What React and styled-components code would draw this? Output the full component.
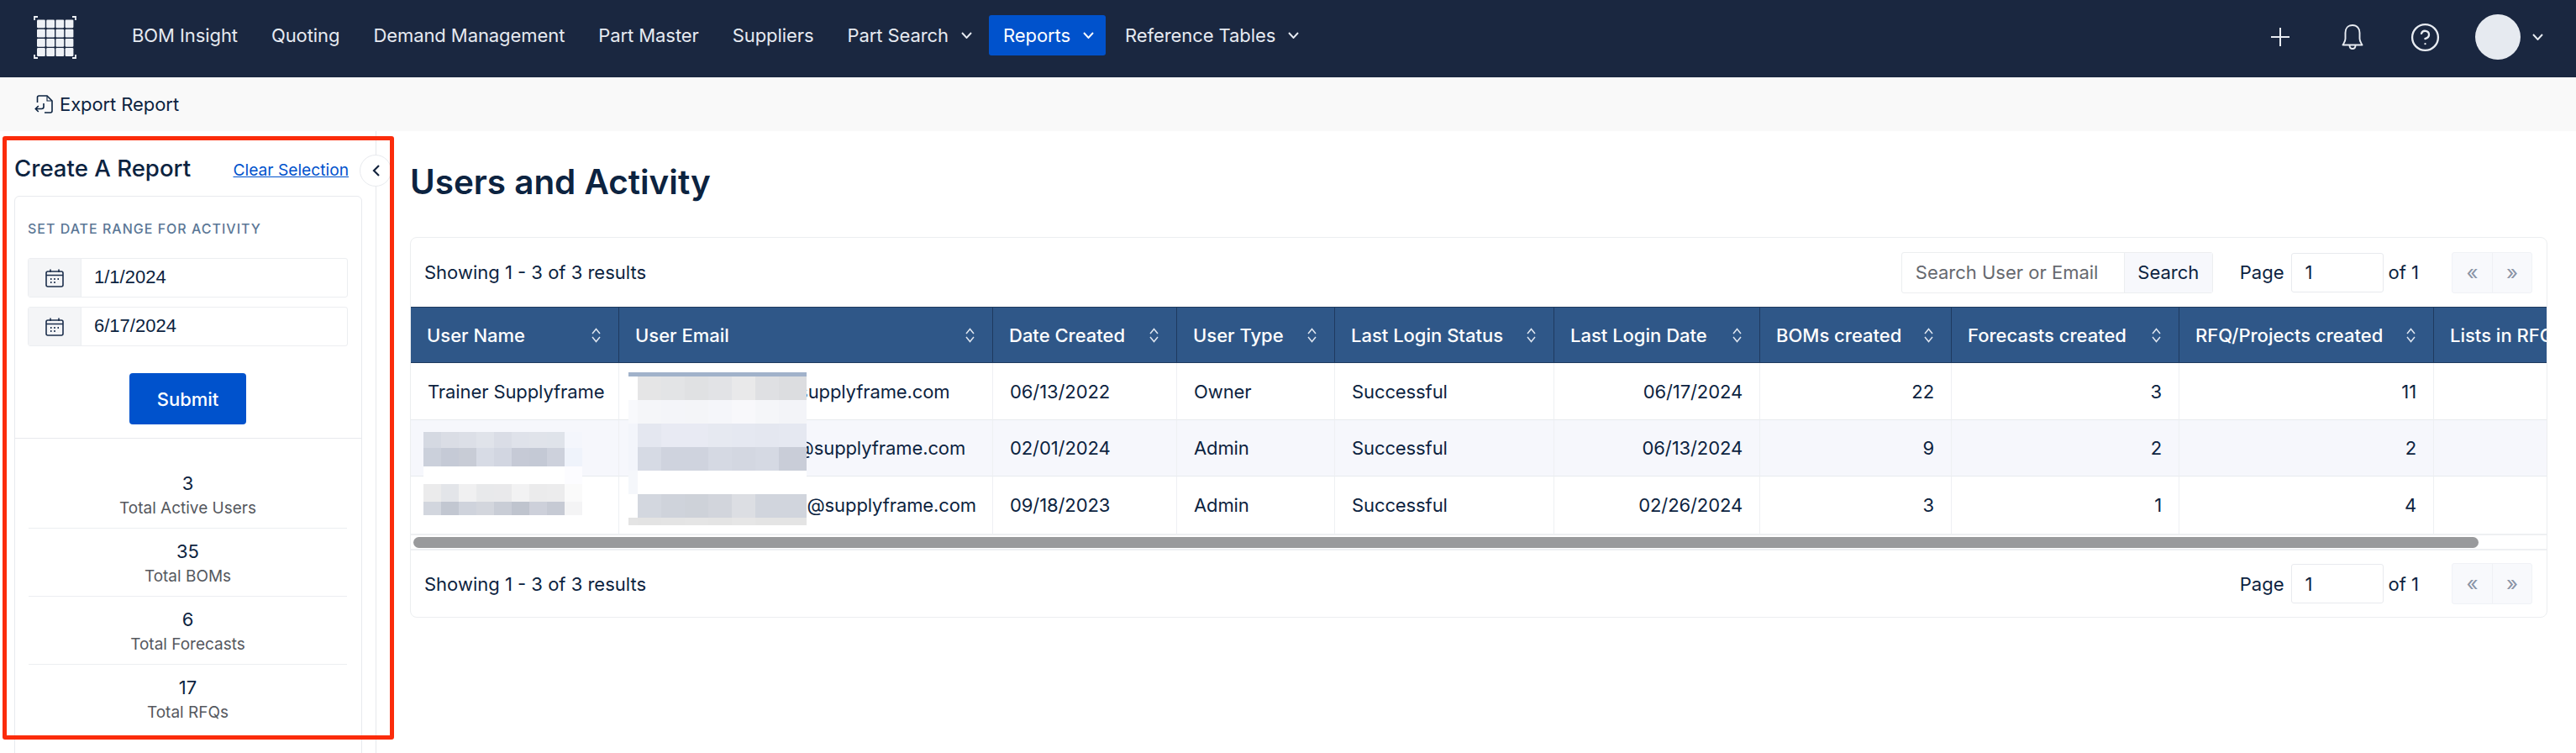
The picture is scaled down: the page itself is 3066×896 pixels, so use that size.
import styled, { createGlobalStyle } from "styled-components";
import { CircleHelp } from "lucide-react";

const GlobalStyle = createGlobalStyle`
  html, body {
    margin: 0;
    padding: 0;
    height: 100%;
    overflow: hidden;
    background: #fff;
    font-family: Inter, "Liberation Sans", sans-serif;
    color: #0c2340;
  }
  * {
    box-sizing: border-box;
  }
`;

const navItems = [
  { label: "BOM Insight" },
  { label: "Quoting" },
  { label: "Demand Management" },
  { label: "Part Master" },
  { label: "Suppliers" },
  { label: "Part Search", caret: true },
  { label: "Reports", caret: true, active: true },
  { label: "Reference Tables", caret: true },
];

const stats = [
  { value: 3, label: "Total Active Users" },
  { value: 35, label: "Total BOMs" },
  { value: 6, label: "Total Forecasts" },
  { value: 17, label: "Total RFQs" },
];

const columns = [
  { label: "User Name", width: 248 },
  { label: "User Email", width: 445 },
  { label: "Date Created", width: 219 },
  { label: "User Type", width: 188 },
  { label: "Last Login Status", width: 261 },
  { label: "Last Login Date", width: 245 },
  { label: "BOMs created", width: 228 },
  { label: "Forecasts created", width: 271 },
  { label: "RFQ/Projects created", width: 303 },
  { label: "Lists in RFQ/Projects", width: 290 },
];

const rows = [
  ["Trainer Supplyframe", "xxxxxxxxxxxxxxi@supplyframe.com", "06/13/2022", "Owner", "Successful", "06/17/2024", 22, 3, 11],
  ["", "xxxxxxxxxxxxxxxx@supplyframe.com", "02/01/2024", "Admin", "Successful", "06/13/2024", 9, 2, 2],
  ["", "xxxxxxxxxxxxxxxxg@supplyframe.com", "09/18/2023", "Admin", "Successful", "02/26/2024", 3, 1, 4],
];

// mosaic colours of the blurred names and emails, row by row
const nameBlur = [
  { h: 19, cells: ["#d5d9e2", "#dadde5", "#dcdfe7", "#e0e3ea", "#dadde6", "#dfe2ea", "#e0e3ea", "#dfe3ea", "#f4f6fc"] },
  { h: 22, cells: ["#cbd0db", "#c5cad6", "#c8ccd6", "#d7dbe5", "#d2d6e1", "#c6cad6", "#c4c9d5", "#cdd1dc", "#eff3fb"] },
  { h: 21, cells: ["#fff", "#fff", "#fff", "#fff", "#fff", "#fff", "#fff", "#fff", "#fcfcff"] },
  { h: 21, cells: ["#ebebec", "#e3e5e9", "#f0f0f1", "#e8e9eb", "#e9e9eb", "#f2f2f3", "#ebebec", "#ececed", "#fafafa"] },
  { h: 16, cells: ["#d2d6de", "#c2c7d1", "#cfd3dc", "#d3d6dd", "#c9cdd6", "#bfc4ce", "#cdd0da", "#c6cad4", "#f4f4f5"] },
];

const emailBlur = [
  { h: 5, cells: ["#a1b2ca", "#a1b2ca", "#a1b2ca", "#a1b2ca", "#a1b2ca", "#a1b2ca", "#a1b2ca", "#a1b2ca"] },
  { h: 28, cells: ["#fff", "#e5e5e6", "#e3e4e6", "#e0e1e3", "#e2e3e6", "#e9e9ea", "#dfe0e3", "#dcdde0"] },
  { h: 28, cells: ["#f8f9fc", "#f5f6f9", "#f4f5f9", "#f4f5f8", "#f5f6fa", "#f8f8fb", "#f5f6f9", "#f3f4f8"] },
  { h: 28, cells: ["#f3f5fb", "#e4e7f0", "#e8eaf3", "#e8eaf3", "#e6e9f1", "#e5e8f1", "#e4e7f0", "#e5e8f1"] },
  { h: 28, cells: ["#f3f5fb", "#d6dae4", "#cfd3de", "#cfd3de", "#d5d9e3", "#d3d7e1", "#d5d9e3", "#c9cdd8"] },
  { h: 28, cells: ["#f5f7fb", "#fff", "#fff", "#fff", "#fff", "#fff", "#fff", "#fff"] },
  { h: 28, cells: ["#fff", "#d3d7df", "#cfd3db", "#ced2d9", "#d2d5dc", "#dcdee3", "#d1d5dd", "#d1d5dd"] },
  { h: 9, cells: ["#e4e4e4", "#e3e3e3", "#e4e4e4", "#e5e5e5", "#e4e4e4", "#e6e6e6", "#e4e4e4", "#e4e4e4"] },
];

function Mosaic({ data, colWidths, className }) {
  let y = 0;
  const width = colWidths.reduce((a, b) => a + b, 0);
  const height = data.reduce((a, r) => a + r.h, 0);
  return (
    <svg className={className} width={width} height={height} viewBox={`0 0 ${width} ${height}`} shapeRendering="crispEdges">
      {data.map((row, i) => {
        let x = 0;
        const top = y;
        y += row.h;
        return row.cells.map((fill, j) => {
          const left = x;
          x += colWidths[j];
          return <rect key={`${i}-${j}`} x={left} y={top} width={colWidths[j]} height={row.h} fill={fill} />;
        });
      })}
    </svg>
  );
}

function Logo() {
  const cells = [];
  for (let r = 0; r < 4; r++) {
    for (let c = 0; c < 4; c++) {
      cells.push(<rect key={`${r}${c}`} x={4 + c * 11.2} y={4.5 + r * 11.2} width="9.8" height="9.8" rx="1.2" fill="#eef1f6" />);
    }
  }
  return (
    <svg width="51" height="51" viewBox="0 0 51 51" fill="none">
      {cells}
      <path d="M1 5V1H5M46 1H50V5M1 46V50H5M46 50H50V46" stroke="#eef1f6" strokeWidth="1.8" />
    </svg>
  );
}

function Caret() {
  return (
    <svg width="13" height="8" viewBox="0 0 13 8" fill="none">
      <polyline points="1,1 6.5,7 12,1" stroke="currentColor" strokeWidth="1.9" />
    </svg>
  );
}

function SortIcon() {
  return (
    <svg width="13" height="18" viewBox="0 0 13 18" fill="none">
      <path d="M2 7L6.5 1.5L11 7M2 11L6.5 16.5L11 11" stroke="#dfe6f0" strokeWidth="1.5" />
    </svg>
  );
}

function CalendarIcon() {
  return (
    <svg width="22" height="22" viewBox="0 0 22 22" fill="none" stroke="#1c2f4c" strokeWidth="1.6">
      <rect x="1" y="3" width="20" height="18" rx="2" />
      <path d="M1 7.5H21M6 0.5V4M16 0.5V4" />
      <path d="M6 12H7.5M10.2 12H11.8M14.5 12H16M6 16H7.5M10.2 16H11.8" strokeWidth="1.8" />
    </svg>
  );
}

function ExportIcon() {
  return (
    <svg width="22" height="22" viewBox="0 0 22 22" fill="none" stroke="#0c2340" strokeWidth="1.6">
      <path d="M3.5 9V3Q3.5 1 5.5 1H15L21 7V19Q21 21 19 21H12" />
      <path d="M15 1.5V7H20.5" strokeWidth="1.1" />
      <path d="M11 10V14Q11 16.5 8.5 16.5H1.5M4.8 13L1.3 16.5L4.8 20" />
    </svg>
  );
}

function BellIcon() {
  return (
    <svg width="26" height="30" viewBox="0 0 26 30" fill="none" stroke="#e8ecf2" strokeWidth="1.9">
      <path d="M13 1C7.5 1 4.5 5 4.5 10V17C4.5 20 3 21.5 1.5 24.5H24.5C23 21.5 21.5 20 21.5 17V10C21.5 5 18.5 1 13 1Z" strokeLinejoin="round" />
      <path d="M9.5 25C9.5 27.5 11 29 13 29C15 29 16.5 27.5 16.5 25" />
    </svg>
  );
}

function PlusIcon() {
  return (
    <svg width="22" height="22" viewBox="0 0 22 22" fill="none" stroke="#e8ecf2" strokeWidth="2">
      <path d="M11 0V22M0 11H22" />
    </svg>
  );
}

function ChevronLeftIcon() {
  return (
    <svg width="9" height="14" viewBox="0 0 9 14" fill="none" stroke="#13243e" strokeWidth="2.2">
      <polyline points="8,1 2,7 8,13" />
    </svg>
  );
}

function Pagination() {
  return (
    <PageControls>
      <PageLabel>Page</PageLabel>
      <PageInput>1</PageInput>
      <PageLabel>of 1</PageLabel>
      <Pager>
        <PagerButton>«</PagerButton>
        <PagerButton>»</PagerButton>
      </Pager>
    </PageControls>
  );
}

function App() {
  return (
    <Page>
      <GlobalStyle />
      <TopBar>
        <LogoSlot>
          <Logo />
        </LogoSlot>
        <Nav>
          {navItems.map((item) => (
            <NavItem key={item.label} $active={item.active}>
              {item.label}
              {item.caret && <Caret />}
            </NavItem>
          ))}
        </Nav>
        <RightTools>
          <PlusIcon />
          <ToolSlot $gap={62}>
            <BellIcon />
          </ToolSlot>
          <ToolSlot $gap={55}>
            <CircleHelp size={37} strokeWidth={1.5} color="#e8ecf2" />
          </ToolSlot>
          <Avatar />
          <ToolSlot $gap={14}>
            <Caret />
          </ToolSlot>
        </RightTools>
      </TopBar>
      <ActionBar>
        <ExportIcon />
        <span>Export Report</span>
      </ActionBar>
      <Body>
        <Sidebar>
          <SidebarHead>
            <SidebarTitle>Create A Report</SidebarTitle>
            <ClearLink>Clear Selection</ClearLink>
          </SidebarHead>
          <CollapseButton>
            <ChevronLeftIcon />
          </CollapseButton>
          <SideCard>
            <DateSection>
              <SectionLabel>Set date range for activity</SectionLabel>
              <DateField>
                <DateAddon>
                  <CalendarIcon />
                </DateAddon>
                <DateValue>1/1/2024</DateValue>
              </DateField>
              <DateField>
                <DateAddon>
                  <CalendarIcon />
                </DateAddon>
                <DateValue>6/17/2024</DateValue>
              </DateField>
              <SubmitButton>Submit</SubmitButton>
            </DateSection>
            <StatList>
              {stats.map((s) => (
                <StatRow key={s.label}>
                  <StatValue>{s.value}</StatValue>
                  <StatLabel>{s.label}</StatLabel>
                </StatRow>
              ))}
            </StatList>
          </SideCard>
        </Sidebar>
        <Main>
          <Title>Users and Activity</Title>
          <TableCard>
            <CardBar>
              <ResultCount>Showing 1 - 3 of 3 results</ResultCount>
              <BarRight>
                <SearchGroup>
                  <SearchInput>Search User or Email</SearchInput>
                  <SearchButton>Search</SearchButton>
                </SearchGroup>
                <Pagination />
              </BarRight>
            </CardBar>
            <TableClip>
              <Table>
                <colgroup>
                  {columns.map((c) => (
                    <Col key={c.label} $w={c.width} />
                  ))}
                </colgroup>
                <thead>
                  <tr>
                    {columns.map((c) => (
                      <Th key={c.label}>
                        <ThInner>
                          <span>{c.label}</span>
                          <SortIcon />
                        </ThInner>
                      </Th>
                    ))}
                  </tr>
                </thead>
                <tbody>
                  {rows.map((row, i) => (
                    <tr key={i}>
                      {row.map((val, j) => (
                        <Td key={j} $right={j >= 5}>
                          {val}
                        </Td>
                      ))}
                      <Td />
                    </tr>
                  ))}
                </tbody>
              </Table>
              <NameMosaic data={nameBlur} colWidths={[21, 21, 21, 21, 21, 21, 21, 21, 21]} />
              <EmailMosaic data={emailBlur} colWidths={[11, 28, 28, 28, 28, 28, 28, 33]} />
            </TableClip>
            <ScrollTrack>
              <ScrollThumb />
            </ScrollTrack>
            <CardFoot>
              <ResultCount>Showing 1 - 3 of 3 results</ResultCount>
              <Pagination />
            </CardFoot>
          </TableCard>
        </Main>
      </Body>
      <Callout />
    </Page>
  );
}

const Page = styled.div`
  position: relative;
  display: flex;
  flex-direction: column;
  height: 100vh;
  overflow: hidden;
`;

const TopBar = styled.header`
  display: flex;
  align-items: center;
  height: 92px;
  flex: none;
  padding: 0 39px 4px 40px;
  background: #1a2740;
`;

const LogoSlot = styled.div`
  display: flex;
  margin-right: 46px;
`;

const Nav = styled.nav`
  display: flex;
  align-items: center;
  flex: 1;
  margin-bottom: 4px;
`;

const NavItem = styled.div`
  display: flex;
  align-items: center;
  gap: 15px;
  height: 48px;
  padding: ${(p) => (p.$active ? "0 14px 0 17px" : "0 20px")};
  margin-right: ${(p) => (p.$active ? "3px" : "0")};
  border-radius: 3px;
  font-size: 22px;
  letter-spacing: -0.08px;
  color: ${(p) => (p.$active ? "#fff" : "#e6eaf1")};
  background: ${(p) => (p.$active ? "#0052cc" : "transparent")};
  white-space: nowrap;
`;

const RightTools = styled.div`
  display: flex;
  align-items: center;
  color: #e8ecf2;
`;

const ToolSlot = styled.div`
  display: flex;
  margin-left: ${(p) => p.$gap}px;
`;

const Avatar = styled.div`
  width: 54px;
  height: 54px;
  margin-left: 41px;
  border-radius: 50%;
  background: #e6eaf0;
`;

const ActionBar = styled.div`
  display: flex;
  align-items: center;
  gap: 8px;
  height: 64px;
  flex: none;
  padding: 0 41px;
  background: #f9f9f9;
  font-size: 22px;
  letter-spacing: -0.08px;
`;

const Body = styled.div`
  display: flex;
  flex: 1;
  min-height: 0;
`;

const Sidebar = styled.aside`
  position: relative;
  width: 448px;
  flex: none;
  border-right: 1px solid #e6e8ec;
  padding: 26px 16px 0 17px;
`;

const SidebarHead = styled.div`
  display: flex;
  align-items: center;
  justify-content: space-between;
  height: 36px;
  padding-right: 16px;
  margin-bottom: 15px;
`;

const SidebarTitle = styled.div`
  font-size: 27.6px;
  font-weight: 500;
  color: #0c2340;
`;

const ClearLink = styled.a`
  margin-top: 4px;
  font-size: 19.2px;
  color: #0052cc;
  text-decoration: underline;
`;

const CollapseButton = styled.div`
  position: absolute;
  top: 28px;
  right: -19px;
  display: flex;
  align-items: center;
  justify-content: center;
  width: 38px;
  height: 38px;
  border: 1px solid #e8eaee;
  border-radius: 50%;
  background: #fff;
`;

const SideCard = styled.div`
  border: 1px solid #e8eaee;
  border-radius: 6px;
  height: 800px;
`;

const DateSection = styled.div`
  display: flex;
  flex-direction: column;
  padding: 27px 16px 16px 15px;
  border-bottom: 1px solid #e8eaee;
`;

const SectionLabel = styled.div`
  height: 22px;
  line-height: 22px;
  margin-bottom: 24px;
  font-size: 16px;
  font-weight: 500;
  letter-spacing: 1px;
  text-transform: uppercase;
  color: #5b7796;
`;

const DateField = styled.div`
  display: flex;
  height: 47px;
  margin-bottom: 11px;
  border: 1px solid #eceef1;
  border-radius: 3px;
`;

const DateAddon = styled.div`
  display: flex;
  align-items: center;
  justify-content: center;
  width: 63px;
  background: #f4f5f7;
  border-right: 1px solid #eceef1;
`;

const DateValue = styled.div`
  display: flex;
  align-items: center;
  padding: 0 0 2px 15px;
  font-family: "Liberation Sans", Arial, sans-serif;
  font-size: 22px;
  color: #0c2340;
`;

const SubmitButton = styled.div`
  align-self: center;
  display: flex;
  align-items: center;
  justify-content: center;
  width: 139px;
  height: 61px;
  margin-top: 21px;
  border-radius: 4px;
  background: #0052cc;
  color: #fff;
  font-size: 22px;
  font-weight: 500;
`;

const StatList = styled.div`
  display: flex;
  flex-direction: column;
  padding: 26px 17px 0 16px;
`;

const StatRow = styled.div`
  display: flex;
  flex-direction: column;
  align-items: center;
  padding: 13px 0 8px;
  border-bottom: 1px solid #eceef1;
  &:last-child {
    border-bottom: none;
  }
`;

const StatValue = styled.div`
  height: 28px;
  line-height: 28px;
  margin-bottom: 1px;
  font-size: 22px;
  color: #0c2340;
`;

const StatLabel = styled.div`
  height: 30px;
  line-height: 30px;
  font-size: 19px;
  color: #55585e;
`;

const Main = styled.main`
  flex: 1;
  min-width: 0;
  padding: 37px 34px 0 40px;
`;

const Title = styled.h1`
  height: 48px;
  line-height: 48px;
  margin: 0 0 41px;
  font-size: 40.4px;
  font-weight: 600;
  color: #0c2340;
`;

const TableCard = styled.section`
  position: relative;
  display: flex;
  flex-direction: column;
  height: 453px;
  border: 1px solid #eceef0;
  border-radius: 8px;
`;

const CardBar = styled.div`
  display: flex;
  align-items: center;
  justify-content: space-between;
  height: 82px;
  flex: none;
  padding: 0 17px 0 16px;
`;

const ResultCount = styled.div`
  font-size: 22px;
  color: #0c2340;
`;

const BarRight = styled.div`
  display: flex;
  align-items: center;
`;

const SearchGroup = styled.div`
  display: flex;
  width: 371px;
  height: 49px;
  margin-right: 32px;
  border: 1px solid #eceef0;
  border-radius: 3px;
`;

const SearchInput = styled.div`
  display: flex;
  align-items: center;
  flex: 1;
  padding-left: 16px;
  font-size: 22px;
  color: #66696f;
`;

const SearchButton = styled.div`
  display: flex;
  align-items: center;
  justify-content: center;
  width: 105px;
  background: #f7f8fc;
  border-left: 1px solid #eceef0;
  font-size: 22px;
  color: #0c2340;
`;

const PageControls = styled.div`
  display: flex;
  align-items: center;
`;

const PageLabel = styled.span`
  font-size: 22px;
  color: #0c2340;
`;

const PageInput = styled.div`
  display: flex;
  align-items: center;
  width: 110px;
  height: 47px;
  margin: 0 6px 0 8px;
  padding-left: 16px;
  border: 1px solid #e8eaee;
  border-radius: 3px;
  font-size: 22px;
`;

const Pager = styled.div`
  display: flex;
  margin-left: 39px;
  border: 1px solid #f0f2f6;
  border-radius: 3px;
  background: #f8f9fc;
`;

const PagerButton = styled.div`
  display: flex;
  align-items: center;
  justify-content: center;
  width: 47px;
  height: 47px;
  font-size: 24px;
  color: #8a94a6;
  & + & {
    border-left: 1px solid #eff1f5;
  }
`;

const TableClip = styled.div`
  position: relative;
  overflow: hidden;
  flex: none;
`;

const Table = styled.table`
  width: 2698px;
  table-layout: fixed;
  border-collapse: separate;
  border-spacing: 0;
  tbody tr:nth-child(even) td {
    height: 67px;
    background: #f6f7fc;
  }
  tbody tr:last-child td {
    border-bottom: none;
  }
`;

const Col = styled.col`
  width: ${(p) => p.$w}px;
`;

const Th = styled.th`
  height: 67px;
  padding: 0 20px 0 19px;
  background: #2f5788;
  border-top: 1px solid #1f3a5f;
  border-bottom: 1px solid #1f3a5f;
  border-right: 1px solid #1f3a5f;
  color: #fff;
  font-size: 22px;
  font-weight: 500;
  text-align: left;
  white-space: nowrap;
`;

const ThInner = styled.div`
  display: flex;
  align-items: center;
  justify-content: space-between;
`;

const Td = styled.td`
  height: 68px;
  padding: 0 20px;
  border-right: 1px solid #eef0f3;
  border-bottom: 1px solid #e8eaee;
  font-size: 22px;
  letter-spacing: -0.1px;
  color: #0c2340;
  text-align: ${(p) => (p.$right ? "right" : "left")};
  white-space: nowrap;
  overflow: hidden;
`;

const NameMosaic = styled(Mosaic)`
  position: absolute;
  left: 15px;
  top: 149px;
`;

const EmailMosaic = styled(Mosaic)`
  position: absolute;
  left: 259px;
  top: 78px;
`;

const ScrollTrack = styled.div`
  flex: none;
  height: 20px;
  padding: 2px 3px;
  border-top: 2px solid #eef0f2;
  border-bottom: 2px solid #eef0f2;
  background: #fff;
`;

const ScrollThumb = styled.div`
  width: 2458px;
  height: 13px;
  border-radius: 7px;
  background: #999a9c;
`;

const CardFoot = styled.div`
  display: flex;
  align-items: center;
  justify-content: space-between;
  flex: 1;
  padding: 0 17px 0 16px;
`;

const Callout = styled.div`
  position: absolute;
  left: 3px;
  top: 162px;
  width: 466px;
  height: 718px;
  border: 5px solid #fb2c0b;
  border-radius: 3px;
  pointer-events: none;
`;

export default App;
